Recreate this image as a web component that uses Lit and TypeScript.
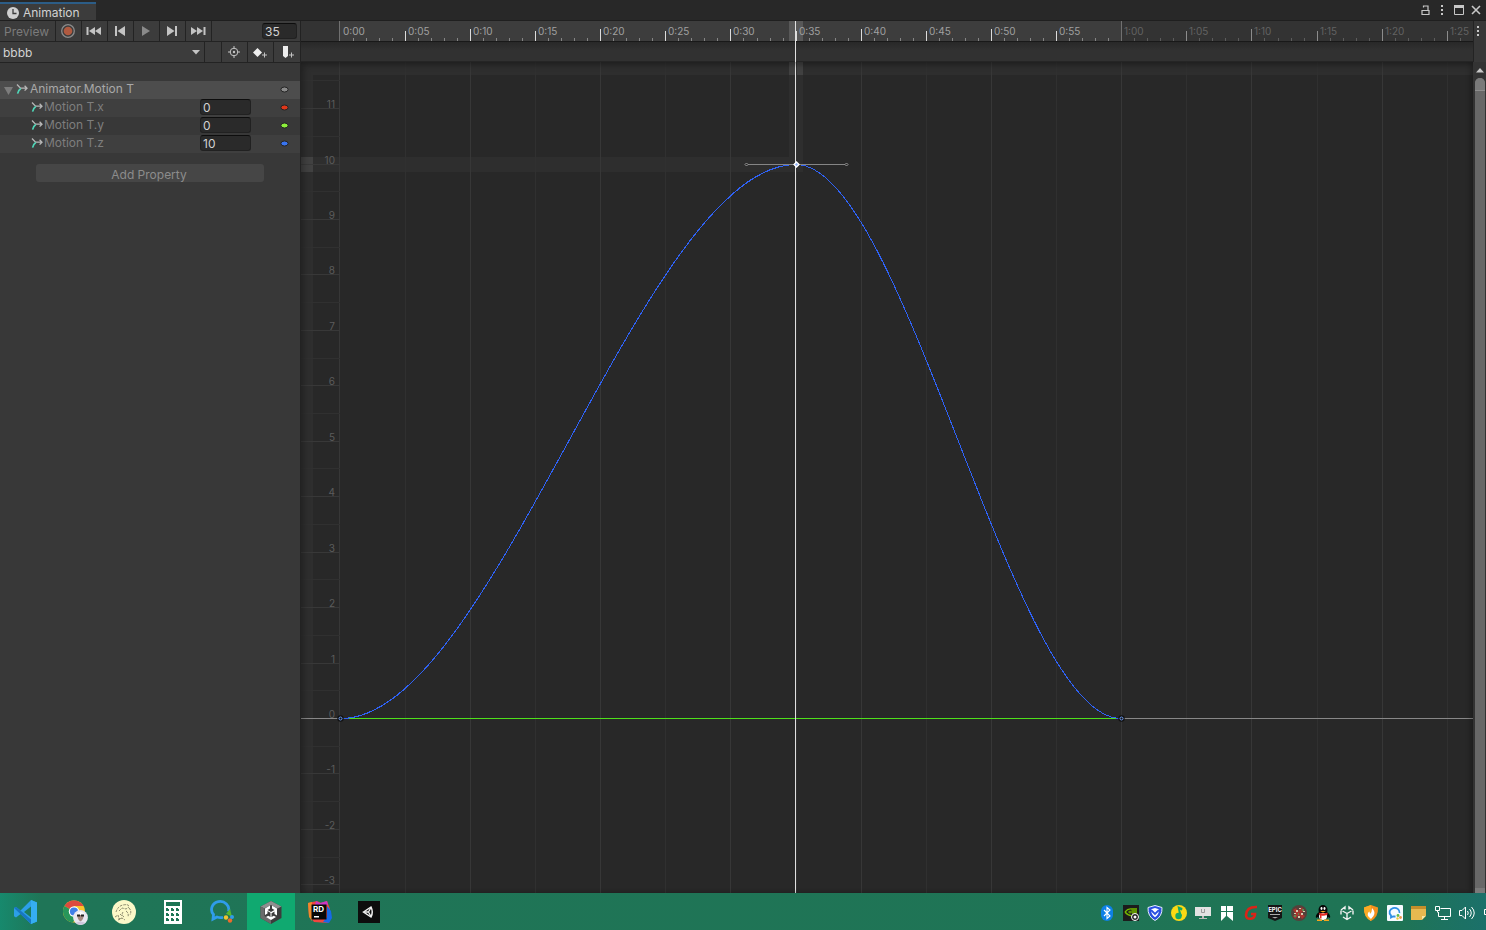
import { LitElement, html, svg, css, nothing } from "lit";
import { customElement, property, state } from "lit/decorators.js";

const FRAME = 13.025;
const UNIT = 55.45;
const ORIGIN_X = 39;
const ORIGIN_Y = 656;

const frameX = (f: number) => (f === 0 ? ORIGIN_X - 1 : Math.round(ORIGIN_X + f * FRAME - 0.3));
const valueY = (v: number) => Math.round(ORIGIN_Y - v * UNIT);
const timeLabel = (f: number) => `${Math.floor(f / 60)}:${String(f % 60).padStart(2, "0")}`;
const range = (a: number, b: number) => Array.from({ length: Math.max(0, b - a + 1) }, (_, i) => a + i);

const channelIcon = html`<svg class="channel" width="12" height="12" viewBox="0 0 12 12" fill="none" aria-hidden="true">
  <path d="M1 1.500 L4.500 5.200 H11 M8.600 2.800 L11 5.200 L8.600 7.600" stroke="#b8b8b8" stroke-width="1.300" />
  <path d="M4.800 5.500 Q2.600 6.800 1.600 10.600" stroke="#4fd6b8" stroke-width="1.600" />
</svg>`;

const dots = html`<svg width="4" height="12" viewBox="0 0 4 12" fill="#c8c8c8" shape-rendering="crispEdges">
  <path d="M1 1h2v2h-2zM1 5h2v2h-2zM1 9h2v2h-2z" />
</svg>`;

const transport = [
  { name: "Record", art: svg`<circle cx="8" cy="8" r="6.3" fill="none" stroke="#8c8c8c" stroke-width="1.3"/><circle cx="8" cy="8" r="4.3" fill="#b05a40"/>` },
  { name: "First frame", art: svg`<path d="M0.5 4h2v8h-2zM9 4v8l-6-4zM15 4v8l-6-4z" fill="#c4c4c4"/>` },
  { name: "Previous key", art: svg`<path d="M3 3h2v10h-2zM13 3v10l-7.5-5z" fill="#c4c4c4"/>` },
  { name: "Play", art: svg`<path d="M4 3v10l8-5z" fill="#8a8a8a"/>` },
  { name: "Next key", art: svg`<path d="M11 3h2v10h-2zM3 3v10l7.5-5z" fill="#c4c4c4"/>` },
  { name: "Last frame", art: svg`<path d="M13.5 4h2v8h-2zM7 4v8l6-4zM1 4v8l6-4z" fill="#c4c4c4"/>` },
];

const keyTools = [
  { name: "Filter by selection", art: svg`<circle cx="8" cy="8" r="3.8" fill="none" stroke="#c4c4c4"/><circle cx="8" cy="8" r="1.2" fill="#c4c4c4"/><path d="M8 2v3M8 11v3M2 8h3M11 8h3" stroke="#c4c4c4"/>` },
  { name: "Add keyframe", art: svg`<path d="M5.5 4 L10 8.5 L5.5 13 L1 8.5z" fill="#eee"/><path d="M12.5 8.5v5M10 11h5" stroke="#c4c4c4"/>` },
  { name: "Add event", art: svg`<path d="M5 2h5v10l-2.500 2-2.500-2z" fill="#eee"/><path d="M13.500 8.500v5M11 11h5" stroke="#c4c4c4"/>` },
];

const apps = [
  { name: "Visual Studio Code", art: svg`<path d="M18 1l6 2.500v19L18 25 7.500 15 3 18.500 1 17.300V9l2-1L7.500 11.400z M18 7.500L11 13l7 5.500z" fill="#2c9fe8" fill-rule="evenodd"/><path d="M18 1l6 2.500v19L18 25z" fill="#35aef2"/><path d="M1 9l2-1.200 15 12.700V25z" fill="#1877c2"/>` },
  { name: "Chrome", art: svg`<circle cx="12" cy="12.500" r="11" fill="#f9c52c"/><path d="M12 12.500L2.500 7A11 11 0 0 1 21.600 7H12z" fill="#dd4a3e"/><path d="M12 12.500L2.500 7A11 11 0 0 0 11 23.500l5-9z" fill="#27965a"/><circle cx="12" cy="12.500" r="5.200" fill="#fff"/><circle cx="12" cy="12.500" r="4.100" fill="#3f7fe8"/><circle cx="18.500" cy="18.500" r="7.400" fill="#e9e6ef"/><path d="M14.500 15q4-5 8 0l-.500 1.500h-7z" fill="#fafafa"/><path d="M15.500 16h6q.500 4-3 6.500-3.500-2.500-3-6.500" fill="#a58a80"/><path d="M15 15.500h3v2h-3zM19 15.500h3v2h-3z" fill="#222"/><path d="M13.500 24q5-3 10 0l-5 2z" fill="#cfc6dc"/>` },
  { name: "Sketch", art: svg`<circle cx="13" cy="13" r="12" fill="#fbf8c8"/><path d="M4 18l3-2 1 4 3-1M5 13q2-6 7-7t6 1M8 12l3-3 4 1 3-2M12 13q-2 3 1 5M15 12q3 2 2 6M18 9q3 3 1 7M7 21l4-2 3 2M9 15l2 2" fill="none" stroke="#5d5c48" stroke-width=".7" stroke-dasharray="2.500 1"/>` },
  { name: "Calculator", art: svg`<path d="M4 1h18v24H4z" fill="#fff"/><path d="M6 3h14v4H6zM6 9h3v3H6zM11 9h3v3h-3zM16 9h3v3h-3zM6 14h3v3H6zM11 14h3v3h-3zM16 14h3v3h-3zM6 19h3v3H6zM11 19h3v3h-3zM16 19h3v3h-3z" fill="#1d7555"/><path d="M8 9h1v1H8zM13 9h1v1h-1zM18 9h1v1h-1zM8 14h1v1H8zM13 14h1v1h-1zM18 14h1v1h-1zM8 19h1v1H8zM13 19h1v1h-1zM18 19h1v1h-1z" fill="#fff"/>` },
  { name: "WeCom", art: svg`<path d="M19.500 12.500A8.600 8 0 1 0 4.500 15.500L4 20l4-2q3 1 6 .3" fill="none" stroke="#2f9cea" stroke-width="2.800"/><path d="M18.500 14.500l2-2.500 1 4z" fill="#57b62d" stroke="#57b62d" stroke-width="2"/><circle cx="17" cy="18.500" r="2.200" fill="#f2c431"/><circle cx="21" cy="21.500" r="2.200" fill="#ee6b2c"/><circle cx="23" cy="18" r="2" fill="#2f9cea"/>` },
  { name: "Unity Hub", active: true, art: svg`<path d="M13 2l10.500 5.500v11.500L13 25 2.500 19V7.500z" fill="#3c3c3c"/><path d="M13 2l10.500 5.500-4 2L13 6 6.500 9.500l-4-2z" fill="#8f8f8f"/><path d="M2.500 7.500l4 2V17l6.500 3.500V25L2.500 19z" fill="#6a6a6a"/><path d="M12 6.500v3L9.500 11l3.500 2 3.500-2L14 9.500v-3l5 3v7l-2.500-1.500v-2.500l-3 1.700V18l2.300-1.300 2.200 1.300-5 3-5-3 2.200-1.300L12.500 18v-4.300l-3-1.700v2.500L7 16V9.500z" fill="#fff"/>` },
  { name: "Rider", art: svg`<path d="M1 4l9-2 4 2 6-2 3 8-2 14-14-1-5-6z" fill="#f0453f"/><path d="M1 4l4-1v19l-3-4z" fill="#ee8a2c"/><path d="M9 2l4 2 7-2 1 4H8z" fill="#c938c5"/><path d="M20 7l4 5 1 7-3 5-6-1 4-5z" fill="#1769e8"/><path d="M4.500 5.500h15v15h-15z" fill="#080808"/><text x="6" y="13" font-family="Inter,sans-serif" font-size="8" font-weight="700" fill="#fff">RD</text><path d="M7 17h5v1.500H7z" fill="#fff"/>` },
  { name: "Unity", art: svg`<path d="M2 2h22v22H2z" fill="#0d0d0d"/><path d="M7.500 13l7.500-5q2.500 5 0 10z" fill="none" stroke="#f2f2f2" stroke-width="1.500"/><path d="M8 13h5M12.500 13l2.500-4.500M12.500 13l2.500 4.500" stroke="#f2f2f2" stroke-width="1.300"/>` },
];

const tray = [
  { name: "Bluetooth", art: svg`<rect x="2" width="12" height="16" rx="6" fill="#0d80e6"/><path d="M5 5l6 6-3 2.500v-11L11 5l-6 6" fill="none" stroke="#fff" stroke-width="1.100"/>` },
  { name: "NVIDIA", art: svg`<path d="M0 0h16v16H0z" fill="#1c1c1c"/><path d="M2 7q4-5 9-2v5q-5 2-9-3" fill="none" stroke="#76b900" stroke-width="1.300"/><path d="M5 7q2-3 4 0-2 3-4 0M8 3h6v6H9z" fill="#5e9302"/><circle cx="12" cy="12" r="3.500" fill="#1c1c1c" stroke="#fff"/><circle cx="12" cy="12" r="1.500" fill="#fff"/>` },
  { name: "Security", art: svg`<path d="M8 .5l7 2q.5 9-7 13Q.500 11.500 1 2.500z" fill="#2a50e0" stroke="#e6ecff"/><path d="M8 3l4 1.200q0 5.500-4 8-4-2.500-4-8z" fill="#fff"/><path d="M4 5l4 4 4-4" fill="none" stroke="#2a50e0" stroke-width="1.800"/>` },
  { name: "QQ Music", art: svg`<circle cx="8" cy="8" r="8" fill="#fbd914"/><path d="M6.500 1l5 2-.5 2.500-2-.5 2 6-2.500 1z" fill="#17a765"/><circle cx="7.500" cy="11" r="3.200" fill="#17a765"/>` },
  { name: "Display", art: svg`<path d="M0 2h16v9H0z" fill="#e2e2e2"/><path d="M6.500 4v3.500h3V4" fill="none" stroke="#9b9b9b"/><path d="M7 11h2v2h3v1H4v-1h3z" fill="#bababa"/>` },
  { name: "Bookmarks", art: svg`<path d="M2 1h5v5H2zM8 1h6v5H8zM2 7h5v4l-5 5zM8 7h6v9l-6-5z" fill="#fff"/>` },
  { name: "G", art: svg`<path d="M14 2Q3.500 1.500 3 10q0 4 4.500 3.700T12 9H8" fill="none" stroke="#da2418" stroke-width="2.600"/>` },
  { name: "Epic Games", art: svg`<path d="M1 0h14v13l-7 3-7-3z" fill="#151515"/><text x="8" y="7" text-anchor="middle" font-family="Inter,sans-serif" font-size="6" font-weight="700" fill="#fff">EPIC</text><path d="M3 9h10v1H3zM5 12h6l-3 1.500z" fill="#aaa"/>` },
  { name: "Game", art: svg`<circle cx="8" cy="8" r="8" fill="#54413b"/><path d="M2 5l3-2 2 3 4-4 2 4-3 2 4 3-3 3-3-4-4 4-2-3 3-2z" fill="#a9352f"/><path d="M5 5h2v2H5zM10 8h2v2h-2zM7 11h2v2H7zM8 3h2v1H8zM3 8h2v1H3zM12 6h2v1h-2z" fill="#d9cdb0"/><path d="M3 10h2v2H3zM11 4h2v2h-2zM7 8h1v2H7z" fill="#5f8650"/>` },
  { name: "QQ", art: svg`<ellipse cx="8" cy="5" rx="4.500" ry="5" fill="#050505"/><path d="M4 7Q0 10 1 13l2-1q1 3 5 3t5-3l2 1q1-3-3-6z" fill="#050505"/><ellipse cx="8" cy="11.500" rx="4" ry="3.500" fill="#fff"/><path d="M3.500 7.500q4.500 2 9 0v2q-4 2-6 1v3H5V10z" fill="#e62822"/><ellipse cx="6.500" cy="3.500" rx="1" ry="1.400" fill="#fff"/><ellipse cx="9.500" cy="3.500" rx="1" ry="1.400" fill="#fff"/><path d="M5 6h6l-3 1.500zM2 14.500h5v1.500H2zM9 14.500h5v1.500H9z" fill="#f5a51c"/>` },
  { name: "Unity", art: svg`<path d="M8 8.500V14M8 8.500L3.500 6M8 8.500L12.500 6M2 9.500V5.500M14 9.500V5.500M4 12l4 2.500 4-2.500M2 5l4-3v2.500M14 5l-4-3v2.500" fill="none" stroke="#f2f2f2" stroke-width="1.400"/>` },
  { name: "Firewall", art: svg`<path d="M8 0l7 2.500Q15.500 12 8 16 .5 12 1 2.500z" fill="#f6901e"/><path d="M8 0L1 2.500Q.5 12 8 16z" fill="#fbab25"/><path d="M9 3q4 4 1.500 8L8 14l-3-3q-1-3 1.500-4.500L7 9q2-2 2-6z" fill="#fff"/>` },
  { name: "WeCom", art: svg`<rect width="16" height="16" rx="1" fill="#f6fbff"/><path d="M12.500 8A5 4.500 0 1 0 4 10.500l0 2 2-1h2.500" fill="none" stroke="#2f8fe6" stroke-width="1.800"/><circle cx="11" cy="10.500" r="1.400" fill="#62b94a"/><circle cx="13.500" cy="12.500" r="1.400" fill="#f0944a"/><circle cx="10.500" cy="13.500" r="1.200" fill="#f2cb3c"/>` },
  { name: "Notes", art: svg`<path d="M0 1h15v14H0z" fill="#e6b950"/><path d="M0 1h15v3H0z" fill="#c58f2b"/><path d="M15 11h-4v4z" fill="#fbe6a4"/><path d="M15 11v4h-4z" fill="#1f7455"/>` },
  { name: "Network", art: svg`<path d="M5.500 3.500h10v8H3.500V7M9.500 11.500v3M6 14.500h7M.5 1.500h4v4h-4zM2.500 5.500v2" fill="none" stroke="#fff"/>` },
  { name: "Volume", art: svg`<path d="M.5 5.500h2.500L6.500 2v12L3 10.500H.5z" fill="none" stroke="#fff"/><path d="M8.500 6q1.500 2 0 4M10.500 4q3.500 4 0 8M12.500 2q5.500 6 0 12" fill="none" stroke="#fff"/>` },
];

const channels = [
  { name: "Motion T.x", value: "0", color: "#e0371a" },
  { name: "Motion T.y", value: "0", color: "#8cf03a" },
  { name: "Motion T.z", value: "10", color: "#3874f0" },
];

@customElement("property-panel")
class PropertyPanel extends LitElement {
  static styles = css`
    :host { display: flex; flex-direction: column; width: 300px; flex: none; background: #383838; border-right: 1px solid #222; }
    button, input, select { font: inherit; color: inherit; margin: 0; padding: 0; border: 0; background: none; border-radius: 0; outline: none; box-sizing: border-box; }
    svg { display: block; flex: none; }
    .bar { display: flex; height: 20px; background: #3c3c3c; border-bottom: 1px solid #232323; }
    .bar button { width: 26px; padding-right: 2px; border-right: 1px solid #232323; display: grid; place-items: center; }
    .bar .preview { width: 56px; padding-top: 2px; color: #7b7b7b; }
    .tools button:last-child { border-right: 0; }
    .spacer { flex: 1; }
    .gap { width: 16px; border-right: 1px solid #232323; }
    .num { background: #2a2a2a; border: 1px solid #212121; border-top-color: #0d0d0d; border-radius: 3px; color: #d2d2d2; height: 16px; padding: 0 2px; line-height: 14px; }
    .frame { width: 35px; margin: 2px 3px 0 0; }
    .clip { position: relative; flex: 1; border-right: 1px solid #232323; }
    .clip select { appearance: none; width: 100%; height: 20px; padding: 2px 0 0 3px; color: #d2d2d2; }
    .caret { position: absolute; right: 4px; top: 8px; pointer-events: none; }
    .rows { list-style: none; margin: 18px 0 0; padding: 0; }
    .row { display: flex; align-items: center; height: 18px; box-sizing: border-box; padding: 0 10px 2px 30px; color: #7e7e7e; line-height: 18px; }
    .row:nth-child(even) { background: #3f3f3f; }
    .row.head { background: #4d4d4d; color: #a8a8a8; padding-left: 3px; }
    .channel { margin: 0 1px; }
    .head .channel { margin-right: 2px; }
    .name { flex: 1; height: 18px; }
    .value { width: 51px; margin-right: 29px; }
    .add { margin: 11px 36px 0; height: 18px; border-radius: 3px; background: #464646; color: #8c8c8c; }
    .add button { width: 100%; height: 100%; padding-top: 2px; padding-right: 2px; }
  `;
  render() {
    const key = (color: string) => html`<svg width="10" height="8" viewBox="0 0 10 8"><ellipse cx="4.500" cy="4.500" rx="3.600" ry="2.500" fill=${color} stroke="#242424" /></svg>`;
    return html`
      <div class="bar">
        <button class="preview">Preview</button>
        ${transport.map((t) => html`<button aria-label=${t.name}><svg width="16" height="16" viewBox="0 0 16 16">${t.art}</svg></button>`)}
        <span class="spacer"></span>
        <input class="num frame" aria-label="Current frame" value="35" />
      </div>
      <div class="bar tools">
        <div class="clip">
          <select aria-label="Clip"><option>bbbb</option></select>
          <svg class="caret" width="8" height="5" viewBox="0 0 8 5"><path d="M0 0h8L4 4.500z" fill="#c4c4c4" /></svg>
        </div>
        <span class="gap"></span>
        ${keyTools.map((t) => html`<button aria-label=${t.name}><svg width="16" height="16" viewBox="0 0 16 16">${t.art}</svg></button>`)}
      </div>
      <ul class="rows">
        <li class="row head">
          <svg width="12" height="12" viewBox="0 0 12 12"><path d="M1 4h9L5.500 12z" fill="#7c7c7c" /></svg>
          ${channelIcon}<span class="name">Animator.Motion T</span>${key("#8a8a8a")}
        </li>
        ${channels.map((c, i) => html`<li class="row">
          ${channelIcon}<label class="name" for=${"v" + i}>${c.name}</label>
          <input class="num value" id=${"v" + i} .value=${c.value} />${key(c.color)}
        </li>`)}
      </ul>
      <div class="add"><button>Add Property</button></div>
    `;
  }
}

@customElement("curve-view")
class CurveView extends LitElement {
  @property({ type: Number }) current = 35;
  @property({ type: Number }) last = 60;
  @state() private width = 0;
  @state() private height = 0;

  private observer = new ResizeObserver(() => this.measure());

  static styles = css`
    :host { display: flex; flex-direction: column; flex: 1; min-width: 0; position: relative; overflow: hidden; }
    svg { display: block; width: 100%; }
    text { font-size: 10px; }
    .ruler { height: 20px; background: #333; border-bottom: 1px solid #191919; flex: none; }
    .events { height: 19px; flex: none; background: linear-gradient(#282828, #313131 8px); border-bottom: 1px solid #252525; }
    .plot { flex: 1; min-height: 0; background: #282828; position: relative; }
    .plot svg { height: 100%; }
    .plot::after { content: ""; position: absolute; inset: 0; box-shadow: inset 3px 3px 6px #0004, inset -3px 0 5px #0003; pointer-events: none; }
    .playhead { position: absolute; top: 0; bottom: 0; width: 1px; background: #e0e0e0; }
    .plot .selected { position: absolute; width: 8px; height: 8px; z-index: 1; }
  `;

  connectedCallback() {
    super.connectedCallback();
    this.observer.observe(this);
  }

  disconnectedCallback() {
    super.disconnectedCallback();
    this.observer.disconnect();
  }

  firstUpdated() {
    this.measure();
  }

  private measure() {
    this.width = this.clientWidth;
    this.height = this.clientHeight - 41;
  }

  tick(f: number) {
    const x = frameX(f);
    const inside = f < this.last;
    const color = inside ? "#a0a0a0" : "#626262";
    const label = x + 24 < this.width;
    if (f === 0 || f === this.last)
      return svg`<rect x=${x} y="0" width="1" height="20" fill="#707070"/>${label ? svg`<text x=${f ? x + 3 : x + 4} y="14" fill=${color}>${timeLabel(f)}</text>` : nothing}`;
    if (f % 5)
      return svg`<rect x=${x} y="17" width="1" height="3" fill=${inside ? "#858585" : "#5c5c5c"}/>`;
    const top = f % 10 ? 10 : 8;
    return svg`<rect x=${x} y=${top} width="1" height=${20 - top} fill=${inside ? "#dcdcdc" : "#8c8c8c"}/>
      ${label ? svg`<text x=${x + 3} y="14" fill=${color}>${timeLabel(f)}</text>` : nothing}`;
  }

  render() {
    const frames = Math.floor((this.width - ORIGIN_X) / FRAME);
    const lowest = Math.ceil(((ORIGIN_Y - this.height) / UNIT) * 2);
    const head = frameX(this.current) - 1;
    const x0 = frameX(0) + 2, xm = head + 1, x1 = frameX(this.last);
    const y0 = ORIGIN_Y + 0.5, ym = valueY(10) + 0.5;
    const a = (xm - x0) / 3, b = (x1 - xm) / 3;
    const d = `M${x0} ${y0}C${x0 + a} ${y0} ${xm - a} ${ym} ${xm} ${ym}C${xm + b} ${ym} ${x1 - b} ${y0} ${x1} ${y0}`;
    const endKey = (x: number) => svg`<circle cx=${x} cy=${y0} r="3.200" fill="#111"/><circle cx=${x} cy=${y0} r="1.500" fill="#111" stroke="#6f9cf0"/>`;
    const handle = (x: number) => svg`<path d="M${x - 1.5} ${ym}l1.500-1.500 1.500 1.500-1.500 1.500z" fill="#222" stroke="#9a9a9a"/>`;
    return html`
      <div class="ruler"><svg height="20">
        <rect x=${frameX(0)} y="0" width=${x1 - frameX(0)} height="20" fill="#3d3d3d" />
        <rect x=${head - 6} y="0" width="14" height="20" fill="#585858" />
        ${range(0, frames).map((f) => this.tick(f))}
      </svg></div>
      <div class="events"></div>
      <div class="playhead" style="left:${head}px"></div>
      <div class="plot"><svg role="img" aria-label="Animation curves">
        <rect width="100%" height="13" fill="#2e2e2e" />
        <rect width="12" height="100%" fill="#2e2e2e" />
        <rect y=${ym - 7.5} width=${head + 8} height="15" fill="#2e2e2e" />
        <rect x=${head - 6} width="14" height=${ym + 7.5} fill="#2e2e2e" />
        <rect y=${ym - 7.5} width="12" height="15" fill="#414141" />
        <rect x=${head - 6} width="14" height="13" fill="#414141" />
        ${range(0, Math.floor(frames / 5)).map((i) => svg`<rect x=${frameX(i * 5)} width="1" height="100%" fill=${i % 2 ? "#303030" : "#373737"}/>`)}
        ${range(lowest, 23).map((h) => svg`<rect y=${valueY(h / 2)} width="39" height="1" fill=${h % 2 ? "#303030" : "#383838"}/>
          ${h % 2 ? nothing : svg`<text x="34" y=${valueY(h / 2)} text-anchor="end" fill="#5c5c5c">${h / 2}</text>`}`)}
        <rect y=${ORIGIN_Y} width="100%" height="1" fill="#888" />
        <rect x=${x0} y=${ORIGIN_Y} width=${x1 - x0} height="1" fill="#4ee01a" />
        <path d=${d} fill="none" stroke="#2f62f5" shape-rendering="crispEdges" />
        <path d="M${xm - 48} ${ym}H${xm + 49}" stroke="#858585" />
        ${handle(xm - 49.5)}${handle(xm + 50.5)}
        ${endKey(x0 - 0.5)}${endKey(x1 + 0.5)}
        <rect x=${head} width="1" height="100%" fill="#e0e0e0" />
        <path d="M${xm + 0.5} ${ym - 2.5}l2.500 2.500-2.500 2.500-2.500-2.500z" fill="#8fb0f5" stroke="#fff" stroke-width="1.300" />
      </svg></div>
    `;
  }
}

@customElement("task-bar")
class TaskBar extends LitElement {
  static styles = css`
    :host { display: flex; height: 37px; flex: none; padding-left: 2px; overflow: hidden; background: linear-gradient(90deg, #17896d, #1f7557 40px, #1f7455 1400px, #1b706a); }
    button { border: 0; padding: 0; margin: 0; background: none; display: grid; place-items: center; flex: none; }
    svg { display: block; }
    .apps { display: flex; gap: 1px; flex: 1; }
    .app { width: 48px; padding-top: 1px; }
    .active { background: #10a970; }
    .tray { display: flex; }
    .icon { width: 24px; padding-top: 3px; }
    .edge { width: 7px; padding: 3px 0 0 5px; }
  `;
  render() {
    return html`
      <div class="apps">
        ${apps.map((a) => html`<button class=${a.active ? "app active" : "app"} aria-label=${a.name}><svg width="26" height="26" viewBox="0 0 26 26">${a.art}</svg></button>`)}
      </div>
      <div class="tray">
        ${tray.map((t) => html`<button class="icon" aria-label=${t.name}><svg width="16" height="16" viewBox="0 0 16 16">${t.art}</svg></button>`)}
        <button class="edge" aria-label="Battery"><svg width="2" height="8" viewBox="0 0 2 8"><path d="M2 .5H.5v5H2" fill="none" stroke="#fff" /></svg></button>
      </div>
    `;
  }
}

@customElement("app-root")
class AppRoot extends LitElement {
  static styles = css`
    :host { display: flex; flex-direction: column; height: 100vh; overflow: hidden; background: #282828; font: 12px/18px Inter, "Liberation Sans", sans-serif; }
    button { border: 0; padding: 0; margin: 0; background: none; font: inherit; color: inherit; display: flex; }
    svg { display: block; }
    .title { display: flex; height: 20px; flex: none; justify-content: space-between; border-bottom: 1px solid #1f1f1f; }
    .tab { width: 96px; box-sizing: border-box; margin-top: 2px; padding: 2px 0 0 7px; gap: 4px; align-items: center; background: #3c3c3c; border-top: 2px solid #2c5d87; color: #d2d2d2; }
    .window { display: flex; align-items: center; gap: 10px; padding-right: 5px; }
    .window button:last-child { margin-left: -4px; }
    .body { display: flex; flex: 1; min-height: 0; }
    .side { width: 13px; flex: none; display: flex; flex-direction: column; background: #333; }
    .more { height: 41px; box-sizing: border-box; padding: 4px 0 0 2px; border-left: 1px solid #232323; background: #383838; }
    .up { height: 16px; padding: 6px 0 0 3px; box-sizing: border-box; }
    .thumb { flex: 1; margin: 0 1px 0 2px; border-radius: 5px 5px 0 0; background: #686868; border-bottom: 5px solid #7a7a7a; }
    .grip { height: 12px; border-radius: 5px 5px 0 0; background: #7a7a7a; border-bottom: 1px solid #8e8e8e; }
  `;
  render() {
    return html`
      <header class="title">
        <button class="tab">
          <svg width="12" height="12" viewBox="0 0 12 12"><circle cx="6" cy="6" r="6" fill="#d0d0d0" /><path d="M6 2v4.500h3.500" fill="none" stroke="#3c3c3c" stroke-width="1.300" /></svg>
          Animation
        </button>
        <div class="window">
          <button aria-label="Lock"><svg width="9" height="11" viewBox="0 0 9 11"><path d="M1 5.500h7v4h-7zM2.500 2.500V1h4.500v4.500" fill="none" stroke="#c8c8c8" stroke-width="1.200" /></svg></button>
          <button aria-label="Menu">${dots}</button>
          <button aria-label="Maximize"><svg width="11" height="10" viewBox="0 0 11 10"><path d="M.5 .5h9v9h-9z" fill="none" stroke="#c8c8c8" /><path d="M0 0h10v3H0z" fill="#c8c8c8" /></svg></button>
          <button aria-label="Close"><svg width="10" height="10" viewBox="0 0 10 10"><path d="M1 1l8 8M9 1l-8 8" stroke="#c8c8c8" stroke-width="1.600" /></svg></button>
        </div>
      </header>
      <main class="body">
        <property-panel></property-panel>
        <curve-view></curve-view>
        <aside class="side">
          <button class="more" aria-label="Options">${dots}</button>
          <button class="up" aria-label="Scroll up"><svg width="8" height="5" viewBox="0 0 8 5"><path d="M0 4.500L4 0l4 4.500z" fill="#c8c8c8" /></svg></button>
          <div class="thumb"><div class="grip"></div></div>
        </aside>
      </main>
      <task-bar></task-bar>
    `;
  }
}
